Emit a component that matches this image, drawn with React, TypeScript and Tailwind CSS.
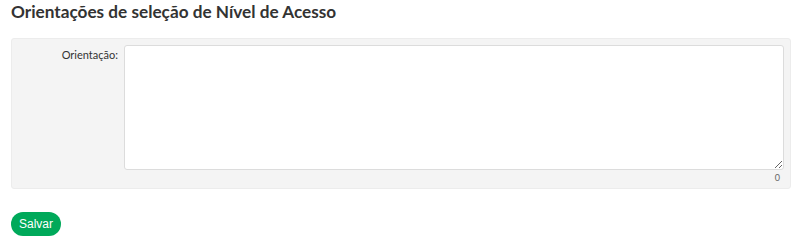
import React, { useState } from "react";

const App = () => {
  const [text, setText] = useState("");

  return (
    <main
      className="min-h-screen bg-white px-[10px] text-[#333]"
      style={{ fontFamily: "Lato, 'Liberation Sans', sans-serif" }}
    >
      <h1 className="ml-[1px] text-[17.2px] font-bold leading-[24px] text-[#333]">
        Orientações de seleção de Nível de Acesso
      </h1>
      <div className="mt-[14px] ml-[1px] mr-[-1px] rounded-[3px] border border-[#ececec] bg-[#f4f4f4] pt-[6px] pb-[5px] pr-[6px]">
        <div className="flex">
          <label className="w-[112px] shrink-0 pr-[6px] pt-[3px] text-right text-[11px] leading-[14px] text-[#333]">
            Orientação:
          </label>
          <div className="flex-1">
            <textarea
              value={text}
              onChange={e => setText(e.target.value)}
              className="block h-[125px] w-full rounded-[3px] border border-[#dcdcdc] bg-white p-1 text-[12px] outline-none"
            />
            <div className="mt-[3px] pr-[4px] text-right text-[9px] leading-[10px] text-[#666]">
              {text.length}
            </div>
          </div>
        </div>
      </div>
      <button
        className="mt-[23px] ml-[1px] h-[24px] w-[50px] rounded-full bg-[#00a95a] text-[12px] text-white"
        style={{ fontFamily: "'Liberation Sans', Arial, sans-serif" }}
      >
        Salvar
      </button>
    </main>
  );
};

export default App;
